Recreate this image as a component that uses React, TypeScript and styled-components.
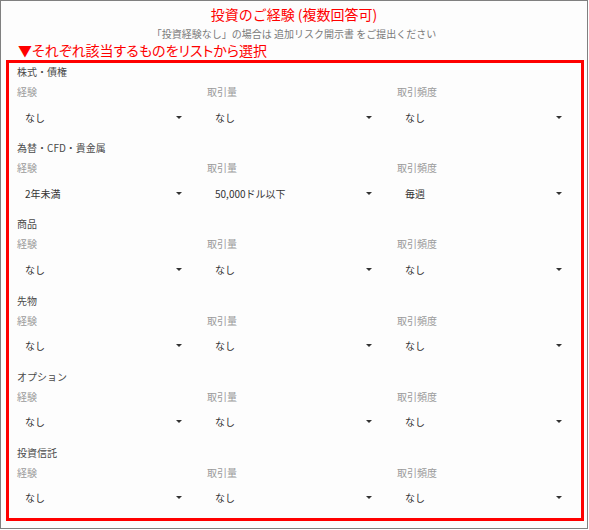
import styled, { createGlobalStyle } from 'styled-components';

type Section = {
  name: string;
  experience: string;
  volume: string;
  frequency: string;
};

const sections: Section[] = [
  { name: '株式・債権', experience: 'なし', volume: 'なし', frequency: 'なし' },
  { name: '為替・CFD・貴金属', experience: '2年未満', volume: '50,000ドル以下', frequency: '毎週' },
  { name: '商品', experience: 'なし', volume: 'なし', frequency: 'なし' },
  { name: '先物', experience: 'なし', volume: 'なし', frequency: 'なし' },
  { name: 'オプション', experience: 'なし', volume: 'なし', frequency: 'なし' },
  { name: '投資信託', experience: 'なし', volume: 'なし', frequency: 'なし' },
];

const GlobalStyle = createGlobalStyle`
  html, body {
    margin: 0;
    padding: 0;
    background: #ffffff;
  }

  body {
    font-family: "Noto Sans CJK JP", "Noto Sans", "Liberation Sans", sans-serif;
  }
`;

const App = () => {
  return (
    <>
      <GlobalStyle />
      <Frame>
        <Title>投資のご経験 (複数回答可)</Title>
        <SubTitle>「投資経験なし」の場合は 追加リスク開示書 をご提出ください</SubTitle>
        <Instruction>▼それぞれ該当するものをリストから選択</Instruction>
        <RedBox>
          {sections.map((section) => (
            <SectionBlock key={section.name}>
              <SectionLabel>{section.name}</SectionLabel>
              <FieldGrid>
                <Field>
                  <FieldLabel>経験</FieldLabel>
                  <SelectBox>
                    <SelectValue>{section.experience}</SelectValue>
                    <Caret />
                  </SelectBox>
                </Field>
                <Field>
                  <FieldLabel>取引量</FieldLabel>
                  <SelectBox>
                    <SelectValue>{section.volume}</SelectValue>
                    <Caret />
                  </SelectBox>
                </Field>
                <Field>
                  <FieldLabel>取引頻度</FieldLabel>
                  <SelectBox>
                    <SelectValue>{section.frequency}</SelectValue>
                    <Caret />
                  </SelectBox>
                </Field>
              </FieldGrid>
            </SectionBlock>
          ))}
        </RedBox>
      </Frame>
    </>
  );
};

export default App;

const Frame = styled.div`
  box-sizing: border-box;
  width: 588px;
  height: 529px;
  padding-top: 3px;

  background: #fdfdfd;
  border: 1px solid #808080;
`;

const Title = styled.div`
  line-height: 20px;
  font-size: 14px;
  color: #ff0000;
  text-align: center;
`;

const SubTitle = styled.div`
  margin-top: 3px;
  line-height: 14px;
  font-size: 10px;
  color: #7a7a7a;
  text-align: center;
`;

const Instruction = styled.div`
  margin-left: 17px;
  line-height: 18px;
  font-size: 14px;
  color: #ff0000;
  font-feature-settings: 'palt';
`;

const RedBox = styled.div`
  box-sizing: border-box;
  width: 578px;
  height: 461px;
  margin: 1px 0 0 5px;
  padding: 1px 0 0 8px;

  border: 3px solid #ff0000;
`;

const SectionBlock = styled.div`
  height: 76.2px;
`;

const SectionLabel = styled.div`
  line-height: 16px;
  font-size: 10px;
  color: #4a4a4a;
`;

const FieldGrid = styled.div`
  display: grid;
  grid-template-columns: repeat(3, 166px);
  column-gap: 24px;
  margin-top: 4px;
`;

const Field = styled.div`
  display: flex;
  flex-direction: column;
`;

const FieldLabel = styled.div`
  line-height: 16px;
  font-size: 10px;
  color: #9a9a9a;
`;

const SelectBox = styled.div`
  display: flex;
  align-items: center;
  justify-content: space-between;
  height: 28px;
  margin-top: 3px;
  padding: 0 0 0 8px;
`;

const SelectValue = styled.span`
  font-size: 10px;
  color: #333333;
`;

const Caret = styled.span`
  width: 0;
  height: 0;
  margin-right: 1px;

  border-left: 3px solid transparent;
  border-right: 3px solid transparent;
  border-top: 3px solid #333333;
`;
